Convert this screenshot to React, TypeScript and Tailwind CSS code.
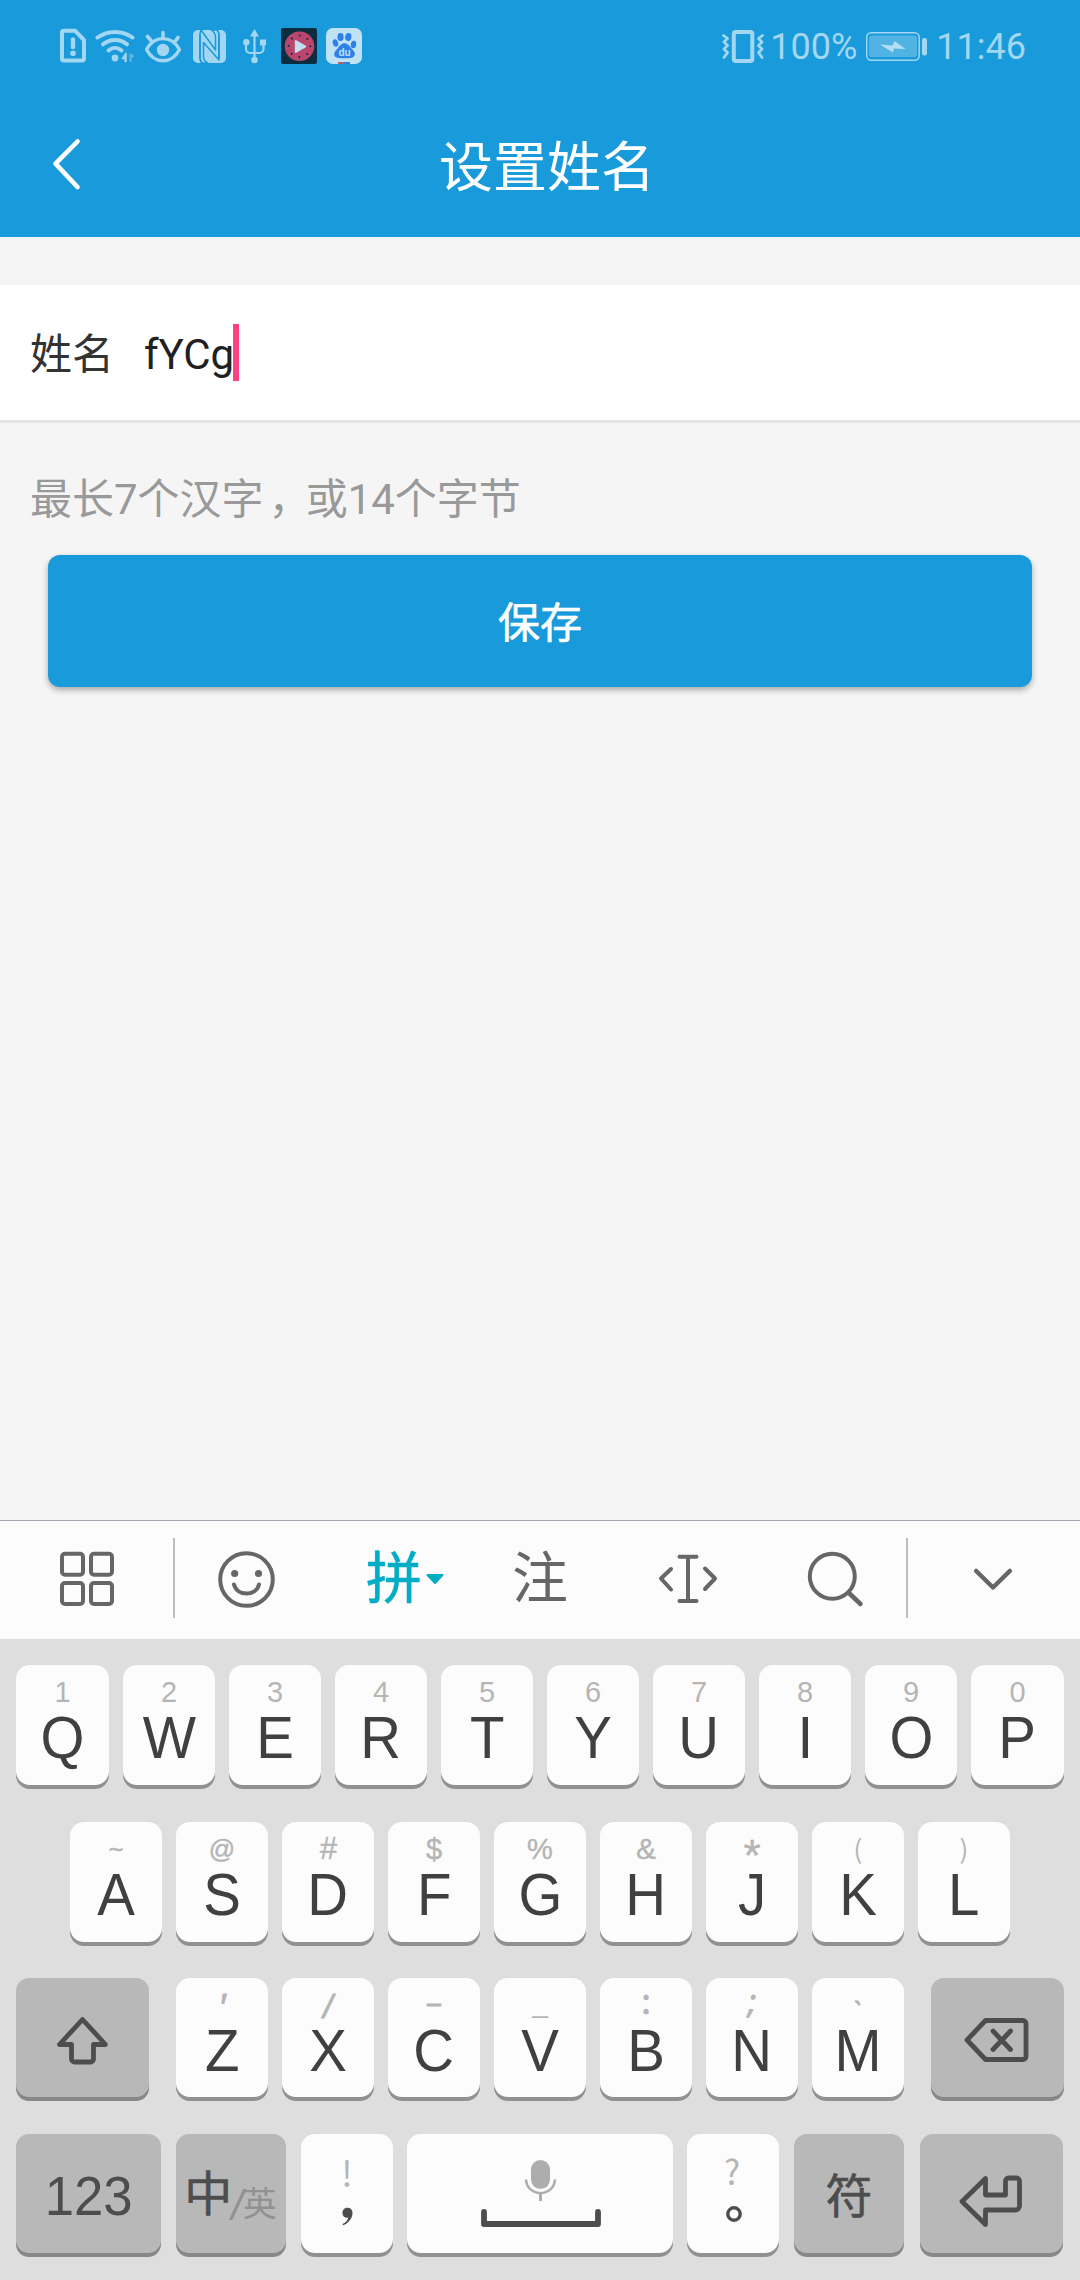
import type { ReactNode } from "react";

const KEY = "flex flex-col items-center rounded-[14px] shadow-[0_4px_0_#919191] bg-[#fcfcfc]";
const DARK_KEY = "flex items-center justify-center rounded-[13px] shadow-[0_4px_0_#888888] bg-[#b8b8b8]";

/** Drawing on the screen's own grid: x/y/w/h is the visible window of that grid. */
function Icon({ x, y, w, h, className = "", children }: {
  x: number; y: number; w: number; h: number; className?: string; children: ReactNode;
}) {
  return (
    <svg className={`block shrink-0 ${className}`} width={w} height={h} viewBox={`${x} ${y} ${w} ${h}`}
      fill="none" strokeLinecap="round" strokeLinejoin="round">
      {children}
    </svg>
  );
}

const PALE = "#a3d7f1";

function StatusBar() {
  return (
    <div className="flex h-[91px] items-center pl-[60px] pr-[54px] text-[36px] leading-[42px] text-[#a3d7f1]">
      <Icon x={60} y={27} w={26} h={36}>
        <path d="M64 29.7h11l9 9.3v18.5a2 2 0 0 1-2 2H64a2 2 0 0 1-2-2V31.7a2 2 0 0 1 2-2z" stroke={PALE} strokeWidth="4" />
        <path d="M73 38.5v7.500" stroke={PALE} strokeWidth="4.4" />
        <circle cx="73" cy="52.3" r="2.8" fill={PALE} />
      </Icon>
      <Icon x={95} y={27} w={42} h={36} className="ml-[9px]">
        <g stroke={PALE} strokeWidth="4">
          <path d="M97.5 36.500c10-7.500 25-7.500 35 0" />
          <path d="M103 43.300c7-5.800 17-5.800 24 0" />
          <path d="M108.500 49.500c4-3.500 9-3.500 13 0" />
        </g>
        <circle cx="115" cy="57" r="3.400" fill={PALE} />
        <path d="M126.500 52v9h-1.800v-3H121.500l4-6z" fill={PALE} stroke={PALE} strokeWidth=".5" />
        <path d="M129.500 52l5 3-3 2v4h-2z" fill="#63b9e6" />
      </Icon>
      <Icon x={145} y={27} w={36} h={36} className="ml-[8px]">
        <path d="M146.500 48.500c8-14.500 25-14.500 33 0-8 15-25 15-33 0z" stroke={PALE} strokeWidth="3.400" />
        <circle cx="163" cy="49" r="6.200" fill={PALE} />
        <path d="M163 31.500v5M147.500 35.500l3.500 4M178 36.500l-2.500 3.500" stroke={PALE} strokeWidth="3.600" />
      </Icon>
      <Icon x={193} y={27} w={33} h={36} className="ml-[12px]">
        <rect x="193" y="29" width="33" height="33" rx="5" fill={PALE} />
        <path d="M202 62c-1.500-1.500-2-3-2-5.500V34M217 29c1.500 1.500 2 3 2 5.500V57" stroke="#189adb" strokeWidth="1.600" strokeLinecap="butt" />
        <path d="M203.500 41.500v14c0 3 1.500 5 4 6.500h-5.500c-1.500-1.500-2-3-2-5.500V32.500l1-3.500 14.500 20V36c0-3-1.500-5-4-7h5.500c1.500 1.500 2 3 2 5.500V59z" fill="none" stroke="#189adb" strokeWidth="1.500" />
      </Icon>
      <Icon x={243} y={27} w={24} h={36} className="ml-[17px]">
        <path d="M254.500 33v25M246 42v6a4 4 0 0 0 4 4h4.500M263.500 42v6a4 4 0 0 1-4 4h-5" stroke={PALE} strokeWidth="2.200" />
        <path d="M254.500 28l4.500 7.500h-9z" fill={PALE} />
        <circle cx="246.300" cy="41.300" r="3.200" fill={PALE} />
        <path d="M260 38.500h6v6h-6z" fill={PALE} />
        <circle cx="254.500" cy="59" r="3.300" fill={PALE} />
      </Icon>
      <Icon x={281} y={27} w={36} h={36} className="ml-[14px]">
        <rect x="281" y="27" width="36" height="36" rx="2" fill="#0a2d40" />
        <circle cx="299.500" cy="45.300" r="14.800" fill="#b9466f" />
        <circle cx="299.500" cy="45.300" r="10.800" stroke="#0a2d40" strokeWidth="2" strokeDasharray="0.010 8.470" />
        <path d="M295.800 40v11l9.500-5.500z" fill="#bfe0f0" stroke="#bfe0f0" strokeWidth="2" />
      </Icon>
      <Icon x={326} y={27} w={36} h={36} className="ml-[9px]">
        <rect x="326" y="27" width="36" height="36" rx="7" fill="#bfe3f5" />
        <g fill="#2f80ea">
          <ellipse cx="340.500" cy="36" rx="3.100" ry="4" />
          <ellipse cx="348.300" cy="36" rx="3.100" ry="4" transform="rotate(12 348.300 36)" />
          <ellipse cx="335.500" cy="42" rx="2.700" ry="3.800" transform="rotate(-15 335.500 42)" />
          <ellipse cx="353.500" cy="43.500" rx="2.700" ry="3.800" transform="rotate(10 353.500 43.500)" />
          <path d="M344.500 42.300c3 0 5 2.700 7 5.200 2.300 2.500 4 4 3.200 6.500-.8 3-4 3.300-10.200 3.300s-9.600-.3-10.200-3.300c-.6-2.500 1-4 3.200-6.500 2-2.500 4-5.200 7-5.200z" />
        </g>
        <text x="344.500" y="54.500" textAnchor="middle" fontFamily="Liberation Sans, sans-serif" fontWeight="bold" fontSize="10" fill="#bfe3f5">du</text>
        <path d="M338 61h6v2h-6z" fill="#b4636f" />
        <path d="M344 61h6v2h-6z" fill="#2f80ea" />
      </Icon>

      <Icon x={722} y={27} w={42} h={36} className="ml-auto">
        <rect x="733.800" y="31" width="18.500" height="29" rx="2" stroke={PALE} strokeWidth="4" />
        <path d="M723.500 34.500l4 3-3.500 3.500 3.500 3.500-3.500 3.500 3.500 3.500-3.500 5M762.500 34.500l-4 3 3.500 3.500-3.500 3.500 3.500 3.500-3.500 3.500 3.500 5" stroke={PALE} strokeWidth="2.800" />
      </Icon>
      <span className="ml-[6px] w-[88px] whitespace-nowrap pt-[2px]">100%</span>
      <Icon x={866} y={27} w={62} h={36} className="ml-[8px]">
        <rect x="866.700" y="31.700" width="52.500" height="27.500" rx="4.500" stroke={PALE} strokeWidth="1.500" />
        <rect x="869" y="34.500" width="48" height="21.500" rx="2" fill="#50b3e4" />
        <path d="M880 43.500l12.500 1 2-4.500 11 8-11.500-.5-1 4z" fill="#b3def4" />
        <rect x="922" y="37" width="5" height="17.500" rx="2" fill={PALE} />
      </Icon>
      <span className="ml-[8px] whitespace-nowrap pt-[2px]">11:46</span>
    </div>
  );
}

function Key({ main, hint, w, hintClass = "text-[29px]" }: { main: string; hint: string; w: string; hintClass?: string }) {
  return (
    <div className={`${KEY} ${w} pt-[13px]`}>
      <span className={`h-7 leading-7 text-[#b5b5b5] ${hintClass}`}>{hint}</span>
      <span className="mt-[3px] scale-x-[0.94] text-[60px] leading-[58px] text-[#404040]">{main}</span>
    </div>
  );
}

const ROW1 = ["Q1", "W2", "E3", "R4", "T5", "Y6", "U7", "I8", "O9", "P0"];
const ROW2 = ["A~", "S@", "D#", "F$", "G%", "H&", "J*", "K(", "L)"];
const ROW3 = ["Z′", "X/", "C−", "V_", "B:", "N;", "Mˋ"];
const ROW2_HINTS = [
  "text-[25px] [-webkit-text-stroke:0.5px]",
  "text-[26px] [-webkit-text-stroke:0.4px]",
  "text-[31px] italic [-webkit-text-stroke:0.4px]",
  "text-[29px] [-webkit-text-stroke:0.4px]",
  "text-[29px] [-webkit-text-stroke:0.4px]",
  "text-[30px] [-webkit-text-stroke:0.4px]",
  "text-[44px] relative top-[7px] [-webkit-text-stroke:0.4px]",
  "text-[26px] font-['Noto_Sans_CJK_SC'] relative -top-px",
  "text-[26px] font-['Noto_Sans_CJK_SC'] relative -top-px",
];
const ROW3_HINTS = [
  "text-[36px] italic relative top-[3px] [-webkit-text-stroke:1px]",
  "text-[34px] italic relative top-px [-webkit-text-stroke:0.8px]",
  "text-[28px] [-webkit-text-stroke:1px]",
  "text-[28px] relative -top-[2px]",
  "font-['Noto_Sans'] text-[34px] relative -top-[4px] [-webkit-text-stroke:1px]",
  "font-['Noto_Sans'] text-[32px] italic relative -top-[4px] [-webkit-text-stroke:0.8px]",
  "text-[28px] relative top-[7px] [-webkit-text-stroke:1px]",
];

function Toolbar() {
  const g = "#666666";
  return (
    <div className="flex h-[119px] items-center border-t border-[#a1a7b0] bg-[#fcfcfc] pb-[2px]">
      <div className="flex w-[173px] justify-center">
        <Icon x={60} y={1551} w={54} h={56}>
          <g stroke={g} strokeWidth="4">
            <rect x="62" y="1553.700" width="21" height="21" rx="3" />
            <rect x="91" y="1553.700" width="21" height="21" rx="3" />
            <rect x="62" y="1583" width="21" height="21" rx="3" />
            <rect x="91" y="1583" width="21" height="21" rx="3" />
          </g>
        </Icon>
      </div>
      <div className="-mt-[2px] h-20 w-[2px] bg-[#bdbdbd]" />
      <div className="flex w-[143px] justify-center">
        <Icon x={218} y={1551} w={57} h={57}>
          <circle cx="246.500" cy="1579.500" r="26.300" stroke={g} strokeWidth="4" />
          <circle cx="234.700" cy="1573.500" r="3.600" fill={g} />
          <circle cx="258.500" cy="1573.500" r="3.600" fill={g} />
          <path d="M234 1584.500c3 12 22 12 25 0" stroke={g} strokeWidth="4" />
        </Icon>
      </div>
      <div className="flex w-[148px] items-center pl-[48px] text-[#00adc4]">
        <span className="-mt-[1px] text-[56px] leading-[60px] [-webkit-text-stroke:0.5px]">拼</span>
        <Icon x={426} y={1573} w={18} h={12} className="ml-[4px]">
          <path d="M427.500 1575h15l-7.500 8z" fill="#00adc4" stroke="#00adc4" strokeWidth="2" />
        </Icon>
      </div>
      <div className="-mt-[1px] w-[148px] text-center text-[56px] leading-[60px] text-[#666]">注</div>
      <div className="flex w-[148px] justify-center">
        <Icon x={658} y={1554} w={60} h={52}>
          <path d="M688 1558v44M679.500 1557.700h17M679.500 1602h17M671 1570l-10 9.500 10 11M705 1569.500l10 10-10 10.500" stroke={g} strokeWidth="4" />
        </Icon>
      </div>
      <div className="flex w-[144px] justify-center pl-[3px]">
        <Icon x={807} y={1551} w={57} h={57}>
          <circle cx="832.300" cy="1576.300" r="22.500" stroke={g} strokeWidth="4" />
          <path d="M849 1593l11.500 11" stroke={g} strokeWidth="4.500" />
        </Icon>
      </div>
      <div className="-mt-[2px] h-20 w-[2px] bg-[#bdbdbd]" />
      <div className="flex w-[169px] justify-center">
        <Icon x={973} y={1567} w={40} h={25}>
          <path d="M976.200 1571l16.800 16.500 16.800-16.500" stroke={g} strokeWidth="4.500" />
        </Icon>
      </div>
    </div>
  );
}

function Keyboard() {
  const d = "#4d4d4d";
  return (
    <div className="h-[641px] bg-[#dedede] px-4 pt-[26px] font-['Liberation_Sans','Noto_Sans_CJK_SC',sans-serif]">
      <div className="flex h-[120px] justify-between">
        {ROW1.map((k, i) => (
          <Key key={k} main={k[0]} hint={k[1]} w={i === 0 || i === 9 ? "w-[93px]" : "w-[92px]"} />
        ))}
      </div>
      <div className="mt-[37px] flex h-[120px] gap-[14px] pl-[54px]">
        {ROW2.map((k, i) => (
          <Key key={k} main={k[0]} hint={k[1]} w="w-[92px]" hintClass={ROW2_HINTS[i]} />
        ))}
      </div>
      <div className="mt-9 flex h-[119px] justify-between">
        <div className={`${DARK_KEY} w-[133px]`}>
          <Icon x={56} y={2015} w={53} h={51} className="mt-[6px]">
            <path d="M82.500 2019.500l-23 25h12V2059a3 3 0 0 0 3 3h16a3 3 0 0 0 3-3v-14.500h12z" stroke={d} strokeWidth="4.800" />
          </Icon>
        </div>
        <div className="flex gap-[14px]">
          {ROW3.map((k, i) => (
            <Key key={k} main={k[0]} hint={k[1]} w="w-[92px]" hintClass={ROW3_HINTS[i]} />
          ))}
        </div>
        <div className={`${DARK_KEY} w-[133px]`}>
          <Icon x={964} y={2016} w={66} h={48} className="mr-[3px] mt-[4px]">
            <path d="M986.500 2020.500H1024a3 3 0 0 1 3 3v33a3 3 0 0 1-3 3h-37.500L968 2040z" stroke={d} strokeWidth="4.800" />
            <path d="M994 2031l17.500 18.500M1011.500 2031L994 2049.500" stroke={d} strokeWidth="4.800" />
          </Icon>
        </div>
      </div>
      <div className="mt-[37px] flex h-[119px] text-[#4d4d4d]">
        <div className={`${DARK_KEY} w-[145px] pt-[5px] text-[56px]`}>
          <span className="scale-x-[0.94]">123</span>
        </div>
        <div className={`${DARK_KEY} ml-[15px] w-[110px] leading-[60px]`}>
          <span className="relative top-[1px] text-[48px] [-webkit-text-stroke:0.6px]">中</span>
          <span className="relative -left-px top-[12px] text-[42px] italic text-[#919191]">/</span>
          <span className="relative -left-px top-[10px] text-[34px] text-[#919191]">英</span>
        </div>
        <div className={`${KEY} ml-[15px] w-[92px] pt-[20px]`}>
          <span className="font-['Noto_Sans_CJK_SC'] text-[35px] leading-[36px] text-[#b5b5b5]">!</span>
          <Icon x={340} y={2205} w={16} h={22} className="ml-[2px] mt-[15px]">
            <path d="M347.500 2207.700c3.200 0 5 2 5 5.300 0 5.500-4.500 10.500-9.500 12.300l-.6-1.300c3-1.300 5.300-3.700 5.800-6.300-3.500.5-5.700-1.500-5.700-4.800 0-3 2-5.200 5-5.200z" fill={d} />
          </Icon>
        </div>
        <div className={`${KEY} ml-[14px] w-[266px] pt-[26px]`}>
          <Icon x={480} y={2160} w={122} h={68} className="ml-[2px]">
            <rect x="531" y="2160" width="19" height="29" rx="9.500" fill="#adadad" />
            <path d="M526 2179.500c1 18 28 18 29 0" stroke="#adadad" strokeWidth="2.600" strokeLinecap="butt" />
            <path d="M540.500 2193v8" stroke="#adadad" strokeWidth="3" strokeLinecap="butt" />
            <path d="M484 2212v12h114v-12" stroke={d} strokeWidth="5.800" />
          </Icon>
        </div>
        <div className={`${KEY} ml-[14px] w-[92px] pt-[20px]`}>
          <span className="relative -left-px -top-px font-['Noto_Sans_CJK_SC'] text-[34px] leading-[36px] text-[#b5b5b5]">?</span>
          <Icon x={724} y={2205} w={18} h={18} className="ml-[2px] mt-[15px]">
            <circle cx="733" cy="2214" r="6.200" stroke={d} strokeWidth="3.400" />
          </Icon>
        </div>
        <div className={`${DARK_KEY} ml-[15px] w-[110px] pt-[8px] text-[47px] [-webkit-text-stroke:0.6px]`}>符</div>
        <div className={`${DARK_KEY} ml-[16px] w-[143px]`}>
          <Icon x={959} y={2174} w={65} h={55} className="mr-[2px] mt-[16px]">
            <path d="M986.500 2178.500v16.500h20v-14a3 3 0 0 1 3-3h8a3 3 0 0 1 3 3v25a4 4 0 0 1-4 4h-30v14.500l-23.500-23z" stroke={d} strokeWidth="4.800" />
          </Icon>
        </div>
      </div>
    </div>
  );
}

export default function App() {
  return (
    <div className="flex h-[2280px] w-[1080px] flex-col overflow-hidden bg-[#f5f5f5] font-['Roboto','Noto_Sans_CJK_SC',sans-serif]">
      <header className="h-[237px] bg-[#189adb]">
        <StatusBar />
        <div className="flex h-[146px] items-center pl-[50px]">
          <Icon x={50} y={137} w={32} h={54}>
            <path d="M77.500 141.500L55.500 163.700l22 23.300" stroke="#fff" strokeWidth="4.600" />
          </Icon>
          <h1 className="ml-[357px] pt-[9px] text-[54px] leading-[60px] text-white">设置姓名</h1>
        </div>
      </header>
      <div className="mt-12 flex h-[138px] items-center border-b-[3px] border-[#e5e5e5] bg-white pl-[30px] text-[42px] leading-[50px]">
        <span className="pt-[5px] text-[#333]">姓名</span>
        <span className="ml-[30px] pt-[4px] text-[#212121]">fYCg</span>
        <span className="-ml-px h-[57px] w-[6px] bg-[#ff4081]" />
      </div>
      <p className="mt-[52px] pl-[30px] text-[42px] leading-[50px] text-[#999]">
        最长7个汉字<span className="relative left-[5px]">，</span>或14个字节
      </p>
      <button className="mx-12 mt-[30px] h-[132px] shrink-0 rounded-xl bg-[#189adb] pt-[6px] text-[42px] leading-[50px] text-white shadow-[0_3px_6px_rgba(0,0,0,0.32)] [-webkit-text-stroke:0.6px]">
        保存
      </button>
      <div className="mt-auto">
        <Toolbar />
        <Keyboard />
      </div>
    </div>
  );
}
